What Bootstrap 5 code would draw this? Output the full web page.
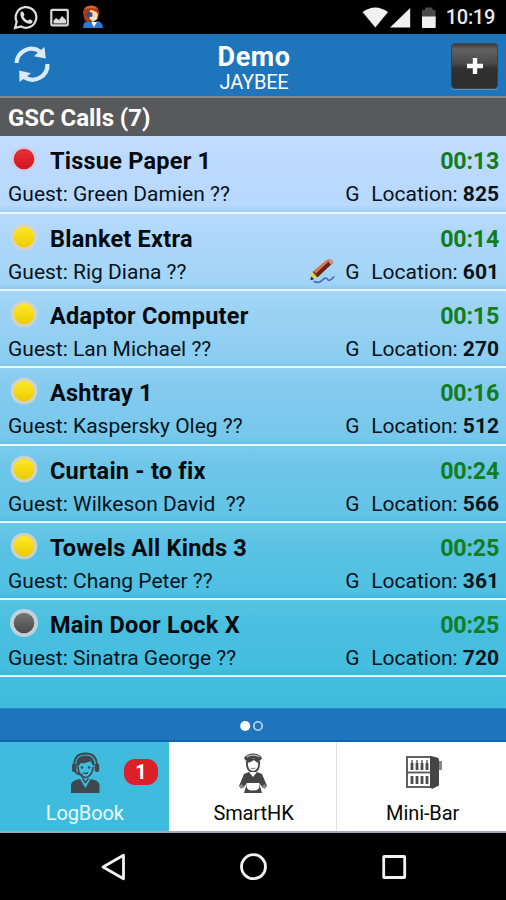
<!DOCTYPE html>
<html lang="en">
<head>
<meta charset="utf-8">
<meta name="viewport" content="width=device-width, initial-scale=1">
<title>GSC Calls</title>
<link href="https://cdn.jsdelivr.net/npm/bootstrap@5.3.0/dist/css/bootstrap.min.css" rel="stylesheet">
<style>
body{font-family:Roboto,"Liberation Sans",sans-serif;background:#000;color:#08131a;width:506px;height:900px;overflow:hidden}
svg{display:block;flex:none}
.statusbar{height:34px;background:#000;padding:1px 11px 1px 13px}
.clock{font-size:20px;line-height:34px;color:#e8e8e8;font-weight:500;letter-spacing:-.3px}
.appbar{height:62px;background:#1f75bb;padding:0 7px 0 13px}
.title{font-size:27px;line-height:28px;font-weight:700;padding-top:9px;letter-spacing:.5px}
.subtitle{font-size:20px;line-height:22px;letter-spacing:-.2px}
.side{width:48px}
.addbtn{width:47px;height:46px;border-radius:4px;border:1px solid #3c4248;background:linear-gradient(#3b3b3b,#626262 12%,#494949 45%,#303030 55%,#2e2e2e);box-shadow:0 1px 0 #5a8fbe}
.section{height:40.4px;background:#58595b;border-top:2px solid #83898f;padding:1px 8px 0;font-size:24px;line-height:39px;font-weight:700;letter-spacing:-.05px}
.calls{height:571.6px;background:linear-gradient(#c0dbfe,#b6d9fd 12%,#a0d4f6 27%,#82caee 45%,#66c4e7 63%,#4cc0e1 82%,#3fbcdd 100%)}
.call{height:77.3px;padding:8px 7px 0 8px;border-bottom:2px solid #e8f7ff;background:linear-gradient(#ffffff10,#ffffff00 30%,#ffffff00 92%,#0078b01c)}
.line1{height:34px;line-height:35px;font-size:23.5px;font-weight:700;color:#05090c}
.line2{height:33px;line-height:33.4px;font-size:21px}
.what{margin-left:10px;white-space:pre;letter-spacing:.23px}
.guest{white-space:pre}
.time{color:#127d20;font-size:23.2px;letter-spacing:-.2px}
.g{width:26px}
.dot{width:32px;height:32px;margin-top:-1px}
.pager{height:34px;background:#1f75bb;border-bottom:2px solid #0d65b0;border-top:1px solid #228fc8}
.tabs{height:91px;background:#fff;border-bottom:2px solid #aaa5b5}
.tab{width:168.67px;padding:8px 0 0 2px;border-right:1px solid #dfe3e8;color:#080808;font-size:20px;line-height:28px}
.tab span:not(.count){padding-top:3px;letter-spacing:-.1px}
.tab.on{background:#3fbcdd;color:#e9fbff;border-color:#3fbcdd}
.count{left:124px;top:17px;width:34px;height:26px;border-radius:11px;background:#dc2029;color:#fff;font-size:20px;line-height:26px;font-weight:700}
.navkeys{height:67px}
</style>
<script src="https://cdn.jsdelivr.net/npm/bootstrap@5.3.0/dist/js/bootstrap.bundle.min.js"></script>
</head>
<body>
<svg width="0" height="0" class="position-absolute" aria-hidden="true"><defs>
<linearGradient id="red" x2="0" y2="1"><stop stop-color="#e8303a"/><stop offset="1" stop-color="#cf1420"/></linearGradient>
<linearGradient id="yellow" x2="0" y2="1"><stop stop-color="#ffe928"/><stop offset="1" stop-color="#eccb00"/></linearGradient>
<linearGradient id="gray" x2="0" y2="1"><stop stop-color="#777"/><stop offset="1" stop-color="#484848"/></linearGradient>
</defs></svg>

<div class="statusbar d-flex align-items-center">
<svg width="96" height="30" viewBox="13 2 96 30">
<path d="M15 28l1.700-6.200A10.300 10.300 0 1 1 21 26.400z" fill="none" stroke="#e0e0e0" stroke-width="2.200"/>
<path d="M20.500 12.500c1-1.500 2.500-1.500 3 0l.9 2c.3.8-1 1.600-.8 2.200 1 2 2.500 3.200 4.300 3.900.7.200 1.300-1.500 2-1.300l2.200 1.100c1 .6.400 2.500-1 3.200-4.500 1.600-12-5-10.600-11.100z" fill="#e0e0e0"/>
<rect x="51.300" y="9.800" width="16.500" height="15.500" rx="1" fill="none" stroke="#d6d6d6" stroke-width="2.200"/>
<path d="M53.500 23.500v-3l2.500-2.500 3 2 3-4 4 4v3.500z" fill="#ddd"/>
<path d="M83 13c0-5 4-7 8-7s8 3 8 7l-1 6-5 3-8-1z" fill="#b23a12"/><path d="M84 9c4-5 12-4 14 0l-7-1z" fill="#e2631f"/>
<path d="M90 10q5 0 8 4l-1 5-4 3-4-4z" fill="#f7d8ac"/><path d="M83 28q0-7 6-7l4 3 4-3q6 1 6 7z" fill="#287bd1"/>
<path d="M91 22l3 5 3-5z" fill="#fff"/><circle cx="89.500" cy="15" r="3" fill="#384990"/><path d="M90 17q3 3 6 1" stroke="#e8eefc" fill="none" stroke-width="1.500"/>
</svg>
<svg class="ms-auto" width="82" height="30" viewBox="360 2 82 30" fill="#f1f1f1">
<path d="M362.500 12q12.700-9 25.500 0L375.300 27.500z"/><path d="M390 27.500L410.200 8v19.500z"/>
<path d="M422 10h3V7.500h7.500V10h3v8h-13.500z" fill="#4a4a4a"/><path d="M422 16.500h13.700V27q0 1-1 1h-11.700q-1 0-1-1z"/>
</svg>
<span class="clock ms-1">10:19</span>
</div>

<header class="appbar d-flex text-white">
<div class="side pt-2"><svg width="39" height="44" viewBox="13 42 39 44" fill="none" stroke="#d9ebf8" stroke-width="4.200">
<path d="M16.500 63A15 15 0 0 1 40 51.500"/><path d="M47.500 64A15 15 0 0 1 24 77"/>
<path d="M44.500 47l1.300 11.500-12-2.300zM19.500 82l-.3-11.500 11.800 2.800z" fill="#d9ebf8" stroke="none"/></svg></div>
<div class="flex-fill text-center pe-1"><div class="title">Demo</div><div class="subtitle">JAYBEE</div></div>
<div class="side" style="padding-top:9px"><div class="addbtn d-flex align-items-center justify-content-center"><svg width="18" height="18" viewBox="0 0 18 18"><path d="M6.800 1h4.400v5.800H17v4.400h-5.800V17H6.800v-5.800H1V6.800h5.800z" fill="#fff"/></svg></div></div>
</header>

<div class="section text-white">GSC Calls (7)</div>

<main class="calls" id="calls"></main>

<div class="pager d-flex justify-content-center align-items-center"><svg width="26" height="14" viewBox="0 0 26 14"><circle cx="5.200" cy="9" r="5" fill="#fff"/><circle cx="18" cy="9" r="4.200" fill="none" stroke="#c5dcf2" stroke-width="1.600"/></svg></div>

<nav class="tabs d-flex">
<div class="tab on position-relative d-flex flex-column align-items-center">
<svg width="36" height="46" viewBox="0 0 36 46" fill="#3d494e"><path d="M7 16C7 7 12 3.500 18.500 3.500S30 7 30 16" fill="none" stroke="#3d494e" stroke-width="1.800"/>
<path d="M9.500 16c-1-7 3-10.500 9-10.500S28 9 27.500 16l-2-1-2-4c-3 2-7 2.500-10 2.300L11 17z"/><rect x="5" y="13.500" width="4.500" height="8.500" rx="2"/><rect x="27.700" y="13.500" width="4.500" height="8.500" rx="2"/>
<path d="M11 17c0 7 4 10.500 7.500 10.500S26 23 26 17M8 21q2 4 8 3.500" fill="none" stroke="#3d494e" stroke-width="1.700"/><circle cx="15" cy="17.500" r="1.200"/><circle cx="22" cy="17.500" r="1.200"/><path d="M16 22q3 1.500 5 0v2h-4z"/>
<path d="M4 43v-7c0-4 3-6 9-7l5.500 9 5-9c6 1 9 3 9 7v7z"/><path d="M15.500 28.500l3 4 3-4" fill="none" stroke="#3d494e" stroke-width="1.500"/></svg>
<span>LogBook</span><span class="count position-absolute text-center">1</span></div>
<div class="tab d-flex flex-column align-items-center">
<svg width="36" height="46" viewBox="0 0 36 46" fill="#454545"><path d="M9 8c3-6 15-6 18 0l-2 3c-4-3-10-3-14 0z"/><path d="M11.500 6.800q6.500-3.300 13 0" stroke="#bbb" stroke-width="1.300" fill="none"/>
<path d="M12 11q-1 10 6 11 7-1 6-11" fill="none" stroke="#454545" stroke-width="1.800"/><path d="M12 13q4-.5 7-3 2 2.500 5 3V9H12z"/><path d="M15.500 18q2.500 1.800 5 0" stroke="#777" fill="none"/>
<path d="M14 22l4 5 4-5 5 2 5 12-4 2-4-5v3H12v-3l-4 5-4-2 5-12z"/><path d="M15 22l3 4 3-4z" fill="#fff"/>
<path d="M12 33h12l3 10H9z"/><path d="M12 33h12c1.500 5-1 7.500-6 7.500s-7.500-2.500-6-7.500z" fill="#fff"/><path d="M4 36l3-2 2 3-3 2zM29 34l3 2-2 3-3-2z" fill="#888"/></svg>
<span>SmartHK</span></div>
<div class="tab d-flex flex-column align-items-center border-end-0">
<svg width="40" height="46" viewBox="0 0 40 46" fill="#454545"><path d="M4 7h24V37H4z" fill="#fff" stroke="#606060" stroke-width="2"/><path d="M28 6l6 1.500q2 .5 2 2v26L29 39l-2-2V7z"/><path d="M36 11h3v9h-3z" fill="#888"/>
<path d="M4 22.500h24" stroke="#555" stroke-width="1.800"/><path d="M9 13v7M14 13v7M19 13v7M24 13v7M9 26v8M14 26v8M19 26v8M24 26v8" stroke="#4c4c4c" stroke-width="2.800"/><path d="M9 10v4M14 10v4M19 10v4M24 10v4" stroke="#4c4c4c" stroke-width="1.300"/></svg>
<span>Mini-Bar</span></div>
</nav>

<div class="navkeys"><svg width="506" height="67" viewBox="0 833 506 67" fill="none" stroke="#f2f2f2" stroke-width="2.800" stroke-linejoin="round"><path d="M103 867l20.500-11.800v23.600z"/><circle cx="253.500" cy="866.700" r="12"/><rect x="383.700" y="856.500" width="21" height="21" rx=".5"/></svg></div>

<script>
const calls=[
["red","Tissue Paper 1","Green Damien ??","00:13","825"],
["yellow","Blanket Extra","Rig Diana ??","00:14","601",true],
["yellow","Adaptor Computer","Lan Michael ??","00:15","270"],
["yellow","Ashtray 1","Kaspersky Oleg ??","00:16","512"],
["yellow","Curtain - to fix","Wilkeson David  ??","00:24","566"],
["yellow","Towels All Kinds 3","Chang Peter ??","00:25","361"],
["gray","Main Door Lock X","Sinatra George ??","00:25","720"]];
const ring={red:"#d5c5d4",yellow:"#d9d3c4",gray:"#d0d2d6"};
const pen=`<svg class="me-2" width="28" height="29" viewBox="0 -1 30 29"><path d="M5 25q5 3 9-1t6-1 7-3" fill="none" stroke="#456bc0" stroke-width="1.800"/><path d="M2 23l2-8 5 5z" fill="#f2d024"/><path d="M1.500 24l1-4 3 3z" fill="#172050"/><path d="M4 15L20 2q5-1 6 3L9 21z" fill="#6d2111"/><path d="M5 14L19 2l3 1L7 17z" fill="#db7648"/><path d="M20 2q5-2 6 3l-3 2z" fill="#d8928c"/></svg>`;
document.getElementById("calls").innerHTML=calls.map(c=>`<div class="call">
<div class="line1 d-flex"><svg class="dot" viewBox="0 0 32 32"><circle cx="16" cy="16" r="${c[0]==="gray"?14:c[0]==="red"?12.5:13.3}" fill="${ring[c[0]]}" opacity="${c[0]==="red"?.7:.9}"/><circle cx="16" cy="16" r="10.300" fill="url(#${c[0]})"/></svg><span class="what">${c[1]}</span><span class="time ms-auto">${c[3]}</span></div>
<div class="line2 d-flex"><span class="guest">Guest: ${c[2]}</span><span class="ms-auto d-flex">${c[5]?pen:""}<span class="g">G</span><span class="loc">Location: <b>${c[4]}</b></span></span></div></div>`).join("");
</script>
</body>
</html>
